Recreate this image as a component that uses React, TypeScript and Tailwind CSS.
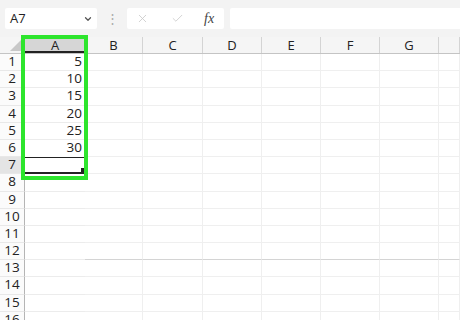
import { X, Check, ChevronDown } from "lucide-react";

const COLS = [
  { label: "B", w: "w-[58px]" },
  { label: "C", w: "w-[60px]" },
  { label: "D", w: "w-[59px]" },
  { label: "E", w: "w-[59px]" },
  { label: "F", w: "w-[59px]" },
  { label: "G", w: "w-[59px]" },
  { label: "", w: "flex-1" },
];

const VALUES = ["5", "10", "15", "20", "25", "30"];

export default function App() {
  const rows = Array.from({ length: 16 }, (_, i) => i + 1);

  return (
    <div className="relative w-[460px] h-[320px] overflow-hidden bg-white font-['Open_Sans',sans-serif] text-[#222]">
      {/* formula toolbar */}
      <div className="flex h-[37px] items-center bg-[#f3f3f3] pl-[5px]">
        <div className="flex h-[21px] w-[92px] items-center justify-between rounded-[2px] bg-white pl-[5px] pr-[4px] text-[13px]">
          <span>A7</span>
          <ChevronDown className="size-[10px] text-[#555]" strokeWidth={3} />
        </div>
        <div className="flex w-[30px] justify-center text-[13px] leading-none text-[#aaa]">⋮</div>
        <div className="flex h-[21px] w-[97px] items-center rounded-[2px] bg-white text-[#c9c9c9]">
          <X className="ml-[9px] size-[13px]" strokeWidth={1.5} />
          <Check className="ml-[22px] size-[13px]" strokeWidth={1.5} />
          <span className="ml-[20px] font-['Liberation_Serif',serif] text-[14px] italic text-[#444]">fx</span>
        </div>
        <div className="ml-[6px] h-[21px] flex-1 rounded-l-[2px] bg-white" />
      </div>

      {/* column headers */}
      <div className="flex h-[17px] border-b border-[#c4c4c4] bg-[#f5f5f5] text-[13px] leading-[16px]">
        <div className="relative w-[25px] border-r border-[#d4d4d4]">
          <div className="absolute bottom-[2px] right-[3px] h-0 w-0 border-b-[11px] border-l-[11px] border-b-[#c8c8c8] border-l-transparent" />
        </div>
        <div className="w-[60px] border-b-2 border-[#222] bg-[#d6d6d6] text-center">A</div>
        {COLS.map((c, i) => (
          <div key={i} className={`${c.w} border-r border-[#d4d4d4] text-center`}>
            {c.label}
          </div>
        ))}
      </div>

      {/* rows */}
      {rows.map((r) => (
        <div key={r} className="flex h-[17.2px] text-[13.5px] leading-[15px]">
          <div
            className={`w-[25px] border-r border-[#b5b5b5] border-b border-b-[#e8e8e8] text-center ${
              r === 7 ? "bg-[#e4e4e4]" : "bg-[#fbfbfb]"
            }`}
          >
            {r}
          </div>
          <div
            className={`relative w-[60px] pr-[3px] text-right ${
              r === 7
                ? "border-t border-b-2 border-[#222]"
                : r === 6
                ? ""
                : "border-b border-[#ececec]"
            }`}
          >
            {VALUES[r - 1] ?? ""}
            {r === 7 && <div className="absolute bottom-0 right-0 size-[4px] bg-[#222]" />}
          </div>
          {COLS.map((c, i) => (
            <div
              key={i}
              className={`${c.w} border-r border-[#efefef] border-b ${
                r === 12 ? "border-b-[#d4d4d4]" : "border-b-[#efefef]"
              }`}
            />
          ))}
        </div>
      ))}

      {/* green highlight box around column A */}
      <div className="absolute left-[21px] top-[35px] h-[145px] w-[67px] border-4 border-[#2de52d]" />
    </div>
  );
}
